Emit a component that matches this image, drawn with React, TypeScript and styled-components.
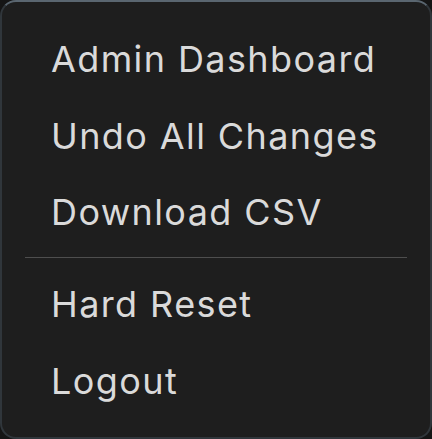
import React from "react";
import styled, { createGlobalStyle } from "styled-components";

const GlobalStyle = createGlobalStyle`
  html, body {
    margin: 0;
    padding: 0;
    background: #151515;
  }
`;

const Menu = styled.div`
  box-sizing: border-box;
  width: 432px;
  height: 439px;
  padding: 19px 0 18px;
  background: #1e1e1e;
  border: 2px solid #30363b;
  border-top-color: #5a6670;
  border-radius: 16px;
  display: flex;
  flex-direction: column;
  font-family: Inter, "Liberation Sans", sans-serif;
`;

const Item = styled.div`
  height: 77px;
  display: flex;
  align-items: center;
  padding-left: 49px;
  color: #dadada;
  font-size: 36px;
  letter-spacing: 1.4px;
  cursor: pointer;
`;

const Divider = styled.hr`
  border: 0;
  height: 1px;
  background: #4e4e4e;
  margin: 6px 23px 8px;
`;

const topItems = ["Admin Dashboard", "Undo All Changes", "Download CSV"];
const bottomItems = ["Hard Reset", "Logout"];

export default function App() {
  return (
    <>
      <GlobalStyle />
      <Menu>
        {topItems.map((label) => (
          <Item key={label}>{label}</Item>
        ))}
        <Divider />
        {bottomItems.map((label) => (
          <Item key={label}>{label}</Item>
        ))}
      </Menu>
    </>
  );
}
